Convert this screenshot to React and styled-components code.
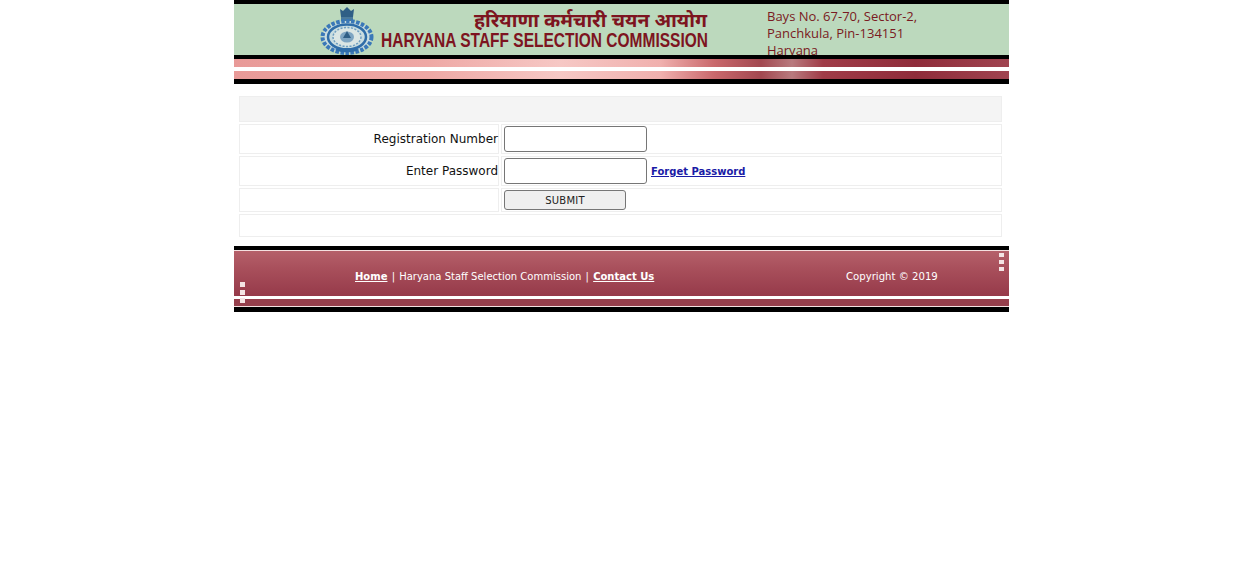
import React from "react";
import styled, { createGlobalStyle } from "styled-components";

const Global = createGlobalStyle`
  html, body { margin: 0; padding: 0; background: #fff; }
  body { font-family: "DejaVu Sans", Verdana, sans-serif; }
`;

const Page = styled.div`
  width: 775px;
  margin-left: 234px;
  display: flex;
  flex-direction: column;
`;

const Masthead = styled.header`
  display: flex;
  flex-direction: column;
  border-top: 4px solid #000;
  border-bottom: 5px solid #000;
`;

const GreenBand = styled.div`
  height: 51px;
  box-sizing: border-box;
  overflow: hidden;
  background: #bcd9bd;
  display: flex;
  align-items: flex-start;
`;

const Emblem = styled.svg`
  width: 54px;
  height: 51px;
  margin: 0 7px 0 86px;
  flex: none;
`;

const TitleBlock = styled.div`
  width: 386px;
  flex: none;
  display: flex;
  flex-direction: column;
  align-items: flex-start;
  color: #7d1420;
`;

const HindiTitle = styled.div`
  font-family: "Noto Sans", "Noto Sans CJK SC", "DejaVu Sans", sans-serif;
  font-size: 19.5px;
  font-weight: 700;
  line-height: 20px;
  height: 20px;
  margin: 6px 0 0 93px;
  white-space: nowrap;
`;

const EnglishTitle = styled.div`
  font-family: "Liberation Sans", Arial, sans-serif;
  font-size: 19.5px;
  font-weight: 700;
  line-height: 20px;
  white-space: nowrap;
  transform: scaleX(0.795);
  transform-origin: left center;
`;

const Address = styled.address`
  font-style: normal;
  font-family: "Open Sans", "DejaVu Sans", sans-serif;
  font-size: 13px;
  line-height: 17px;
  color: #7a1a22;
  padding-top: 4px;
  white-space: nowrap;
`;

const Rule = styled.div`
  height: 4px;
  background: #000;
`;

const Ribbon = styled.div`
  height: 8px;
  background: linear-gradient(
    90deg,
    #e89a98 0%,
    #eea8a5 25%,
    #f6c8c5 42%,
    #f0b0ae 55%,
    #c9686c 62%,
    #a24850 68%,
    #b87a7e 72%,
    #a03c48 76%,
    #8f2c3a 88%,
    #a04450 100%
  );
`;

const RibbonGap = styled.div`
  height: 4px;
  background: #fff;
`;

const FormTable = styled.table`
  width: 767px;
  margin: 10px 0 7px 3px;
  border-collapse: separate;
  border-spacing: 2px;
  font-size: 12px;
  color: #111;
`;

const Row = styled.tr`
  height: ${(p) => p.$h}px;
`;

const Cell = styled.td`
  border: 1px solid #eeeeee;
  padding: 0;
  box-sizing: border-box;
  background: ${(p) => (p.$shade ? "#f4f4f4" : "#fff")};
`;

const LabelCell = styled(Cell)`
  width: 260px;
  text-align: right;
  padding-right: 0;
`;

const FieldCell = styled(Cell)`
  padding-left: 2px;
`;

const FieldRow = styled.div`
  display: flex;
  align-items: center;
  gap: 4px;
`;

const Input = styled.input`
  width: 143px;
  height: 26px;
  box-sizing: border-box;
  border: 1px solid #767676;
  border-radius: 3px;
  background: #fff;
  padding: 0 2px;
  margin: 0;
`;

const ForgetLink = styled.a`
  font-size: 10px;
  font-weight: 700;
  color: #1a1aa6;
  text-decoration: underline;
  margin-top: 1px;
`;

const Submit = styled.button`
  width: 122px;
  height: 20px;
  box-sizing: border-box;
  display: block;
  border: 1px solid #767676;
  border-radius: 3px;
  background: #efefef;
  color: #222;
  font-family: "DejaVu Sans", sans-serif;
  font-size: 10px;
  letter-spacing: 0.2px;
  padding: 0;
`;

const Footer = styled.footer`
  display: flex;
  flex-direction: column;
  border-top: 4px solid #000;
  border-bottom: 5px solid #000;
`;

const FooterMain = styled.div`
  position: relative;
  height: 46px;
  box-sizing: border-box;
  border-top: 1px solid #f4e0e0;
  background: linear-gradient(180deg, #b5606a 0%, #a84f5b 40%, #963a4a 100%);
  color: #fff;
  font-size: 10.15px;
  display: flex;
  align-items: flex-start;
  padding-top: 20px;
`;

const FooterNav = styled.nav`
  margin-left: 121px;
  width: 491px;
  flex: none;
  white-space: nowrap;
  font-size: 10px;
`;

const FooterLink = styled.a`
  color: #fff;
  font-weight: 700;
  text-decoration: underline;
`;

const Separator = styled.span`
  margin: 0 1px;
`;

const Copyright = styled.div`
  white-space: nowrap;
`;

const Dots = styled.div`
  position: absolute;
  ${(p) => (p.$side === "right" ? "right: 5px; top: 2px;" : "left: 6px; top: 31px;")}
  display: flex;
  flex-direction: column;
  gap: 3px;
`;

const Dot = styled.span`
  display: block;
  width: 5px;
  height: ${(p) => (p.$side === "right" ? 4 : 5)}px;
  background: #f4e4e4;
`;

const FooterGap = styled.div`
  height: 3px;
  background: #fff;
`;

const FooterBase = styled.div`
  height: 8px;
  box-sizing: border-box;
  background: #963f4c;
  border-bottom: 1px solid #f4e0e0;
`;

const StateEmblem = () => (
  <Emblem viewBox="0 0 54 51" aria-hidden="true">
    <path d="M20 5l3 2 4-4 4 4 3-2-1 8H21z" fill="#2f5f86" />
    <path d="M21 13h12v4H21z" fill="#4a7a9c" />
    <ellipse cx="27" cy="33" rx="24.5" ry="16" fill="#c9dde0" stroke="#3a78b8" strokeWidth="4" strokeDasharray="3.5 1.5" />
    <ellipse cx="27" cy="33" rx="19" ry="12.5" fill="none" stroke="#2f6da8" strokeWidth="2.5" />
    <ellipse cx="27" cy="33" rx="14" ry="9.5" fill="#dbe6e4" stroke="#6f9ec0" strokeWidth="1.5" strokeDasharray="2 1.5" />
    <ellipse cx="27" cy="33" rx="7" ry="5.5" fill="#7ea5c2" />
    <path d="M27 27l-4 7h8z" fill="#2f5f86" />
    <path d="M15 46q12 5 24 0l-3-2H18z" fill="#2f6da8" />
  </Emblem>
);

const DotColumn = ({ side }) => (
  <Dots $side={side}>
    <Dot $side={side} />
    <Dot $side={side} />
    <Dot $side={side} />
  </Dots>
);

export default function App() {
  return (
    <>
      <Global />
      <Page>
        <Masthead>
          <GreenBand>
            <StateEmblem />
            <TitleBlock>
              <HindiTitle>हरियाणा कर्मचारी चयन आयोग</HindiTitle>
              <EnglishTitle>HARYANA STAFF SELECTION COMMISSION</EnglishTitle>
            </TitleBlock>
            <Address>
              Bays No. 67-70, Sector-2,
              <br />
              Panchkula, Pin-134151
              <br />
              Haryana
            </Address>
          </GreenBand>
          <Rule />
          <Ribbon />
          <RibbonGap />
          <Ribbon />
        </Masthead>

        <FormTable>
          <tbody>
            <Row $h={26}>
              <Cell colSpan={2} $shade />
            </Row>
            <Row $h={30}>
              <LabelCell>Registration Number</LabelCell>
              <FieldCell>
                <FieldRow>
                  <Input type="text" />
                </FieldRow>
              </FieldCell>
            </Row>
            <Row $h={30}>
              <LabelCell>Enter Password</LabelCell>
              <FieldCell>
                <FieldRow>
                  <Input type="password" />
                  <ForgetLink href="#">Forget Password</ForgetLink>
                </FieldRow>
              </FieldCell>
            </Row>
            <Row $h={24}>
              <LabelCell />
              <FieldCell>
                <Submit type="button">SUBMIT</Submit>
              </FieldCell>
            </Row>
            <Row $h={23}>
              <Cell colSpan={2} />
            </Row>
          </tbody>
        </FormTable>

        <Footer>
          <FooterMain>
            <FooterNav>
              <FooterLink href="#">Home</FooterLink> <Separator>|</Separator> Haryana Staff Selection Commission{" "}
              <Separator>|</Separator> <FooterLink href="#">Contact Us</FooterLink>
            </FooterNav>
            <Copyright>Copyright © 2019</Copyright>
            <DotColumn side="right" />
            <DotColumn side="left" />
          </FooterMain>
          <FooterGap />
          <FooterBase />
        </Footer>
      </Page>
    </>
  );
}
